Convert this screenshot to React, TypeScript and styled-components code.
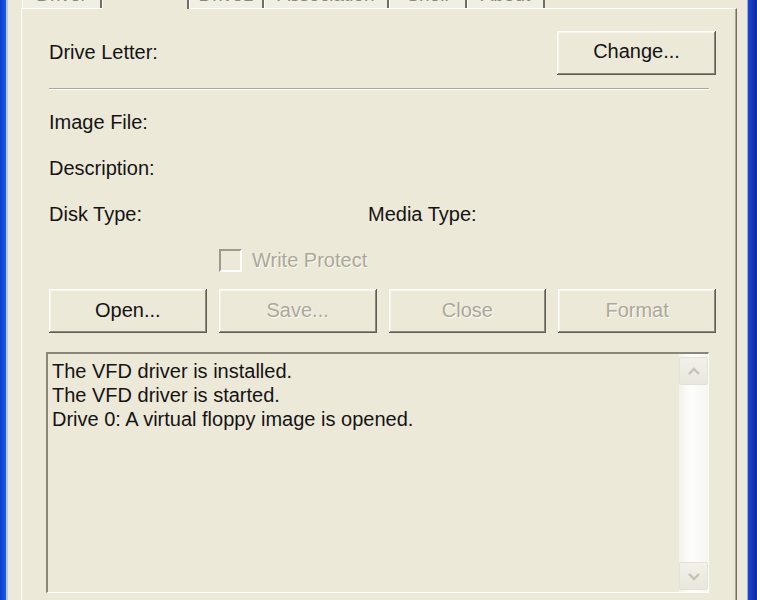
import styled, { createGlobalStyle } from "styled-components";

const GlobalStyle = createGlobalStyle`
  html, body {
    margin: 0;
    padding: 0;
    height: 100%;
    overflow: hidden;
    background: #ece9d8;
  }
  #root {
    height: 100%;
  }
`;

const Window = styled.div`
  display: flex;
  width: 757px;
  height: 600px;
  font-family: "Liberation Sans", Arial, sans-serif;
  font-size: 20px;
  color: #141414;
  background: #ece9d8;
`;

const FrameLeft = styled.div`
  width: 6px;
  background: linear-gradient(to right, #0a3ccc, #1d5ae6);
  border-right: 2px solid #b4c8f2;
`;

const FrameRight = styled.div`
  width: 9px;
  background: linear-gradient(to right, #1f45cc, #0b28a3);
  border-left: 1px solid #93a9e4;
`;

const Body = styled.div`
  flex: 1;
  display: flex;
  flex-direction: column;
  padding: 0 10px 0 13px;
  overflow: hidden;
`;

const TabStrip = styled.div`
  display: flex;
  align-items: flex-end;
  height: 30px;
  margin-top: -22px;
  padding-left: 1px;
`;

const Tab = styled.div<{ $w: number; $active?: boolean }>`
  position: relative;
  z-index: ${(p) => (p.$active ? 1 : 0)};
  width: ${(p) => p.$w}px;
  height: ${(p) => (p.$active ? 31 : 28)}px;
  margin-bottom: ${(p) => (p.$active ? -1 : 0)}px;
  box-sizing: border-box;
  padding-top: 4px;
  text-align: center;
  line-height: 20px;
  font-size: 19px;
  color: #8a877c;
  background: ${(p) => (p.$active ? "#ece9d8" : "#f1efe4")};
  border-top: 1px solid #fff;
  border-left: 1px solid #fff;
  border-right: 2px solid #716f64;
`;

const Panel = styled.div`
  flex: 1;
  display: flex;
  flex-direction: column;
  padding: 22px 20px 0 27px;
  border-top: 1px solid #fff;
  border-left: 1px solid #fff;
  border-right: 1px solid #716f64;
  box-shadow: inset -1px 0 #aca899;
`;

const TopRow = styled.div`
  display: flex;
  align-items: center;
  justify-content: space-between;
  height: 43px;
`;

const Label = styled.span<{ $disabled?: boolean }>`
  white-space: nowrap;
  color: ${(p) => (p.$disabled ? "#aca899" : "inherit")};
  text-shadow: ${(p) => (p.$disabled ? "1px 1px #fbfaf5" : "none")};
`;

const Separator = styled.div`
  width: 660px;
  margin-top: 14px;
  border-top: 1px solid #aca899;
  border-bottom: 1px solid #fff;
`;

const Fields = styled.div`
  display: flex;
  flex-direction: column;
  margin-top: 9px;
`;

const FieldRow = styled.div`
  display: grid;
  grid-template-columns: 319px 1fr;
  align-items: center;
  height: 46px;
`;

const CheckRow = styled.div`
  display: flex;
  align-items: center;
  gap: 10px;
  height: 46px;
  padding-left: 170px;
`;

const CheckBox = styled.span`
  width: 23px;
  height: 23px;
  box-sizing: border-box;
  border-top: 2px solid #9d9a8c;
  border-left: 2px solid #9d9a8c;
  border-right: 2px solid #fff;
  border-bottom: 2px solid #fff;
  background: #ece9d8;
`;

const ButtonRow = styled.div`
  display: grid;
  grid-template-columns: repeat(4, 1fr);
  gap: 12px;
  margin-top: 6px;
`;

const Button = styled.button<{ $width?: number }>`
  width: ${(p) => (p.$width ? `${p.$width}px` : "100%")};
  height: 44px;
  padding: 0 0 2px;
  border: none;
  background: #ece9d8;
  font: inherit;
  color: #141414;
  box-shadow: inset -1px -1px #5f5d54, inset 1px 1px #fdfdfa,
    inset -2px -2px #8c897c, inset 2px 2px #f6f5ef;

  &:disabled {
    color: #aca899;
    text-shadow: 1px 1px #fbfaf5;
  }
`;

const LogBox = styled.div`
  display: flex;
  width: 663px;
  height: 241px;
  box-sizing: border-box;
  margin: 19px 0 0 -3px;
  border-top: 2px solid #8a877a;
  border-left: 2px solid #8a877a;
  border-right: 1px solid #fdfdf9;
  border-bottom: 1px solid #fdfdf9;
  background: #ece9d8;
`;

const LogText = styled.div`
  flex: 1;
  padding: 5px 0 0 4px;
  line-height: 24px;
`;

const ScrollBar = styled.div`
  display: flex;
  flex-direction: column;
  width: 29px;
  padding: 3px 0 2px;
  box-sizing: border-box;
  background: linear-gradient(to right, #f3f2ec, #fdfdfb 40%, #f7f6f1);
`;

const ScrollTrack = styled.div`
  flex: 1;
`;

const ArrowButton = styled.div`
  display: flex;
  align-items: center;
  justify-content: center;
  height: 28px;
  box-sizing: border-box;
  border: 1px solid #e3e1d6;
  border-radius: 2px;
  background: linear-gradient(#f2f1ea, #e9e7dc);
`;

const Chevron = ({ up }: { up?: boolean }) => (
  <svg width="14" height="9" viewBox="0 0 14 9">
    <polyline
      points={up ? "2,7 7,2 12,7" : "2,2 7,7 12,2"}
      fill="none"
      stroke="#c5c2b4"
      strokeWidth="2.4"
    />
  </svg>
);

const tabs = [
  { label: "Driver", w: 80 },
  { label: "Drive0", w: 87, active: true },
  { label: "Drive1", w: 75 },
  { label: "Association", w: 125 },
  { label: "Shell", w: 78 },
  { label: "About", w: 78 },
];

const log = [
  "The VFD driver is installed.",
  "The VFD driver is started.",
  "Drive 0: A virtual floppy image is opened.",
];

export default function App() {
  return (
    <>
      <GlobalStyle />
      <Window>
        <FrameLeft />
        <Body>
          <TabStrip>
            {tabs.map((t) => (
              <Tab key={t.label} $w={t.w} $active={t.active}>
                {t.label}
              </Tab>
            ))}
          </TabStrip>
          <Panel>
            <TopRow>
              <Label>Drive Letter:</Label>
              <Button $width={159}>Change...</Button>
            </TopRow>
            <Separator />
            <Fields>
              <FieldRow>
                <Label>Image File:</Label>
              </FieldRow>
              <FieldRow>
                <Label>Description:</Label>
              </FieldRow>
              <FieldRow>
                <Label>Disk Type:</Label>
                <Label>Media Type:</Label>
              </FieldRow>
              <CheckRow>
                <CheckBox />
                <Label $disabled>Write Protect</Label>
              </CheckRow>
            </Fields>
            <ButtonRow>
              <Button>Open...</Button>
              <Button disabled>Save...</Button>
              <Button disabled>Close</Button>
              <Button disabled>Format</Button>
            </ButtonRow>
            <LogBox>
              <LogText>
                {log.map((line) => (
                  <div key={line}>{line}</div>
                ))}
              </LogText>
              <ScrollBar>
                <ArrowButton>
                  <Chevron up />
                </ArrowButton>
                <ScrollTrack />
                <ArrowButton>
                  <Chevron />
                </ArrowButton>
              </ScrollBar>
            </LogBox>
          </Panel>
        </Body>
        <FrameRight />
      </Window>
    </>
  );
}
